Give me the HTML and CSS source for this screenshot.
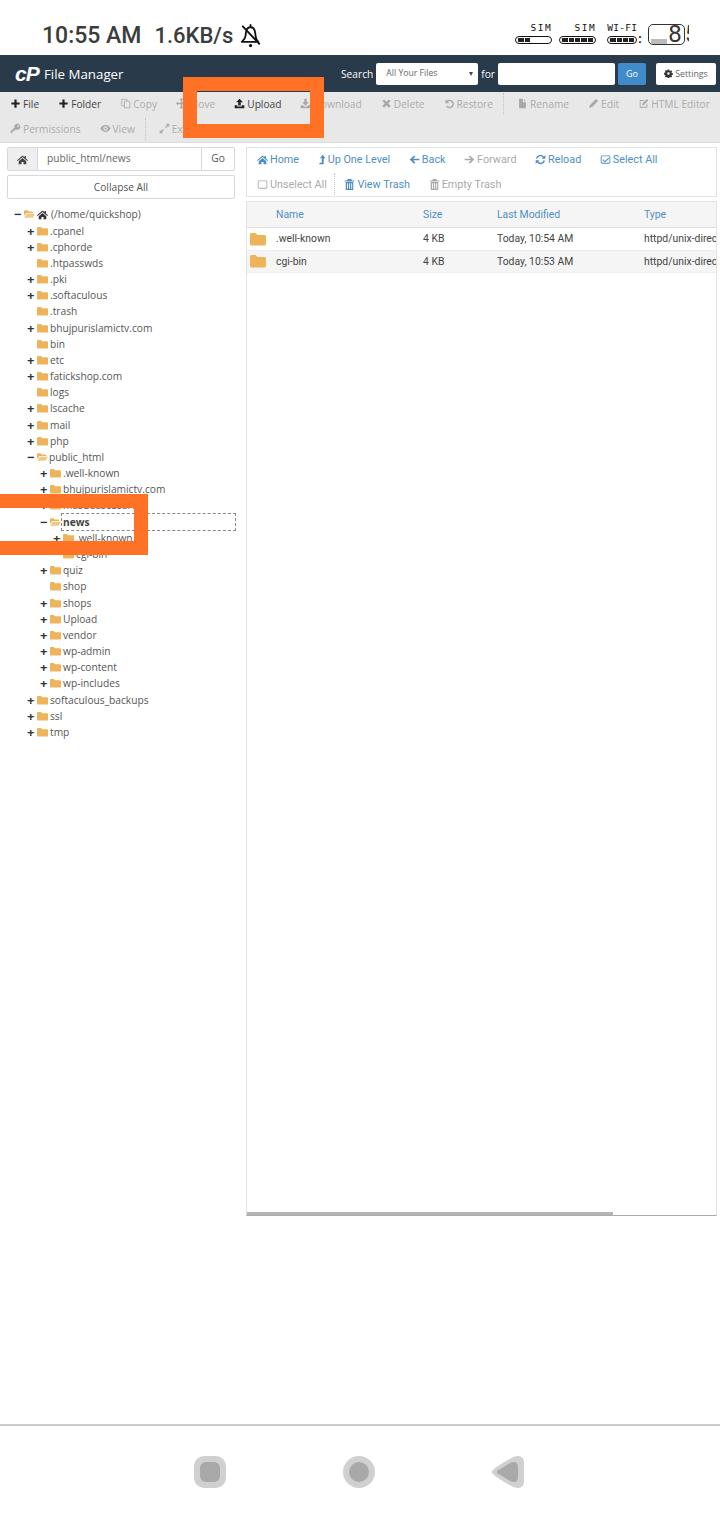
FILE: index.html
```html
<!DOCTYPE html>
<html lang="en">
<head>
    <meta charset="UTF-8">
    <title>File Manager</title>
    <link rel="stylesheet" href="styles.css">
</head>
<body>
    <!-- Icon sprite -->
    <svg class="sprite" xmlns="http://www.w3.org/2000/svg">
        <symbol id="i-plus" viewBox="0 0 16 16"><path d="M6.4 2h3.2v4.4H14v3.2H9.6V14H6.4V9.6H2V6.4h4.4z"/></symbol>
        <symbol id="i-copy" viewBox="0 0 16 16"><path d="M2 1h7l2 2v1h2l2 2v9H6v-3H2zm1.2 1.2v8.6H6V4h3.8V3.4L8.5 2.2zM7.2 5.2v8.6h6.6V6.6l-1.4-1.4z"/></symbol>
        <symbol id="i-move" viewBox="0 0 16 16"><path d="M8 0l3 3H9v4h4V5l3 3-3 3V9H9v4h2l-3 3-3-3h2V9H3v2L0 8l3-3v2h4V3H5z"/></symbol>
        <symbol id="i-upload" viewBox="0 0 16 16"><path d="M8 1l5 5.2H9.8V11H6.2V6.2H3zM1 10.5h3.8v2h6.4v-2H15V15H1z"/></symbol>
        <symbol id="i-download" viewBox="0 0 16 16"><path d="M6.2 1h3.6v5.2H13L8 11.4 3 6.2h3.2zM1 10.5h3l4 3 4-3h3V15H1z"/></symbol>
        <symbol id="i-times" viewBox="0 0 16 16"><path d="M4.5 2L8 5.5 11.5 2 14 4.500 10.500 8 14 11.500 11.500 14 8 10.500 4.500 14 2 11.500 5.500 8 2 4.500z"/></symbol>
        <symbol id="i-undo" viewBox="0 0 16 16"><path d="M2 2l2 2a6.200 6.200 0 1 1-.9 8.200l1.700-1.300A4 4 0 1 0 5.600 5.500L7.500 7.500H2z"/></symbol>
        <symbol id="i-file" viewBox="0 0 16 16"><path d="M3 1h5.500v5H13v9H3zM10 1.300L12.700 4.500H10z"/></symbol>
        <symbol id="i-pencil" viewBox="0 0 16 16"><path d="M11.500 1.500l3 3L6 13l-4.500 1.500L3 10z"/></symbol>
        <symbol id="i-edit" viewBox="0 0 16 16"><path d="M2.500 3H9L7.800 4.300H3.700v8.500h8.500V9l1.300-1.300V14H2.500zM13 1.500l2 2-6.500 6.500-2.500.5.500-2.500z"/></symbol>
        <symbol id="i-key" viewBox="0 0 16 16"><path d="M10.500 1a4.500 4.500 0 1 1-2 8.500L7 11H5v2H3v2H1v-3l5.500-5.500A4.500 4.500 0 0 1 10.500 1zm1.200 2a1.300 1.300 0 1 0 0 2.600 1.300 1.300 0 0 0 0-2.600z"/></symbol>
        <symbol id="i-eye" viewBox="0 0 16 16"><path fill-rule="evenodd" d="M8 3c3.500 0 6 2.500 7.500 5-1.500 2.500-4 5-7.500 5S2 10.500.5 8C2 5.500 4.500 3 8 3zm0 1.800a3.200 3.200 0 1 0 0 6.400 3.200 3.200 0 0 0 0-6.400zM8 6.500a1.500 1.500 0 1 1 0 3 1.500 1.500 0 0 1 0-3z"/></symbol>
        <symbol id="i-expand" viewBox="0 0 16 16"><path d="M10 1h5v5l-1.800-1.800-3 3-1.400-1.400 3-3zM6 15H1v-5l1.800 1.800 3-3 1.400 1.400-3 3z"/></symbol>
        <symbol id="i-gear" viewBox="0 0 16 16"><path fill-rule="evenodd" d="M6.700 1h2.600l.4 2 1.200.5 1.700-1.100 1.800 1.800-1.100 1.700.5 1.200 2 .4v2.600l-2 .4-.5 1.200 1.100 1.700-1.800 1.800-1.700-1.100-1.200.5-.4 2H6.700l-.4-2-1.200-.5-1.700 1.100-1.800-1.800 1.100-1.700-.5-1.200-2-.4V6.700l2-.4.5-1.200-1.100-1.700 1.800-1.800 1.700 1.100 1.200-.5zM8 5.700a2.300 2.300 0 1 0 0 4.600 2.300 2.300 0 0 0 0-4.600z"/></symbol>
        <symbol id="i-home" viewBox="0 0 16 16"><path d="M8 2l3 2.700V3h2v3.500L16 9l-1 1.200L8 4.300 1 10.200 0 9zM8 5.800l5.500 4.700V15H9.500v-3.500h-3V15H2.500v-4.500z"/></symbol>
        <symbol id="i-levelup" viewBox="3 0 11 16"><path d="M9.500 1l4 5H11v7.500c0 .8-.6 1.500-1.500 1.500H4l1.500-2.200h2.700V6H5.500z"/></symbol>
        <symbol id="i-left" viewBox="0 0 16 16"><path d="M7.500 2l1.700 1.700L6 7h9v2.200H6l3.200 3.200L7.500 14 1 8z"/></symbol>
        <symbol id="i-right" viewBox="0 0 16 16"><path d="M8.500 2L6.800 3.700 10 7H1v2.200h9l-3.200 3.200L8.500 14 15 8z"/></symbol>
        <symbol id="i-reload" viewBox="0 0 16 16"><path d="M15 1.500V7H9.500l2-2A4.600 4.600 0 0 0 3.600 6.500H1.200A6.800 6.800 0 0 1 13 3.500zM1 14.500V9h5.500l-2 2a4.600 4.600 0 0 0 7.900-1.500h2.400A6.800 6.800 0 0 1 3 12.500z"/></symbol>
        <symbol id="i-check" viewBox="0 0 16 16"><path fill-rule="evenodd" d="M3 2h10a2 2 0 0 1 2 2v8a2 2 0 0 1-2 2H3a2 2 0 0 1-2-2V4a2 2 0 0 1 2-2zm0 1.300a.8.800 0 0 0-.7.700v8c0 .4.300.7.700.7h10c.4 0 .7-.3.700-.7V4a.8.800 0 0 0-.7-.7zm9.200 2L13.300 6.400 7 12.200 3.500 8.800l1.100-1.100L7 10z"/></symbol>
        <symbol id="i-square" viewBox="0 0 16 16"><path fill-rule="evenodd" d="M3 2h10a2 2 0 0 1 2 2v8a2 2 0 0 1-2 2H3a2 2 0 0 1-2-2V4a2 2 0 0 1 2-2zm0 1.300a.8.800 0 0 0-.7.700v8c0 .4.300.7.700.7h10c.4 0 .7-.3.700-.7V4a.8.800 0 0 0-.7-.7z"/></symbol>
        <symbol id="i-trash" viewBox="0 0 16 16"><path d="M5.500 0h5l1 2H15v1.500H1V2h3.500zM2.500 4.500h11V16h-11zM4.500 6v8.200h1.300V6zm3 0v8.200h1.300V6zm3 0v8.200h1.300V6z"/></symbol>
        <symbol id="i-folder" viewBox="0 0 16 14"><path d="M1.500 1h4.300l1.500 2h7.200c.8 0 1.500.6 1.500 1.500v7.500c0 .8-.7 1.500-1.500 1.500h-13C.7 13.500 0 12.800 0 12V2.500C0 1.700.7 1 1.500 1z"/></symbol>
        <symbol id="i-folder-open" viewBox="0 0 16 14"><path d="M1.200 1.500h4l1.500 1.800h5.500c.7 0 1.200.5 1.200 1.200v1H3.500L0 9.500V2.700c0-.7.500-1.200 1.200-1.200z"/><path opacity=".75" d="M3.800 6.500H16l-3.500 6H0z"/></symbol>
        <symbol id="i-bell-off" viewBox="0 0 24 26"><path fill="none" stroke="#111" stroke-width="2" stroke-linejoin="round" stroke-linecap="round" d="M2 20h18c-2-2-2.800-3.500-3-6.500l-.5-4C16 6 14 4 11.500 4S7 6 6.500 9.500L6 13.500C5.800 16.500 4 18 2 20zM3 3l18 19M11.500 1.500V4"/><circle cx="11.500" cy="24" r="1.800" fill="#111"/></symbol>
    </svg>

    <!-- Phone status bar -->
    <div class="statusbar">
        <span class="clock">10:55 AM</span>
        <span class="speed">1.6KB/s</span>
        <svg class="bell"><use href="#i-bell-off"/></svg>
        <div class="signals">
            <div class="signal sig-sim1">
                <span class="sig-label">SIM</span>
                <div class="pill"><i></i><i></i></div>
            </div>
            <div class="signal sig-sim2">
                <span class="sig-label">SIM</span>
                <div class="pill"><i></i><i></i><i></i><i></i><i></i></div>
            </div>
            <div class="signal sig-wifi">
                <span class="sig-label">WI-FI</span>
                <div class="pill"><i></i><i></i><i></i><i></i></div>
            </div>
            <span class="wifi-dots">:</span>
            <div class="battery">
                <div class="battery-box"><div class="battery-fill"></div></div>
                <span class="battery-num">85</span>
            </div>
        </div>
    </div>

    <!-- cPanel header -->
    <div class="header">
        <span class="cp-logo">cP</span>
        <span class="cp-title">File Manager</span>
        <div class="search">
            <span>Search</span>
            <div class="search-select">All Your Files<span class="caret"></span></div>
            <span>for</span>
            <div class="search-input"></div>
            <div class="btn-go">Go</div>
            <div class="btn-settings"><svg class="ico"><use href="#i-gear"/></svg>Settings</div>
        </div>
    </div>

    <!-- File manager toolbar -->
    <div class="toolbar">
        <div class="tb-row">
            <span class="tb-item on"><svg class="ico"><use href="#i-plus"/></svg>File</span>
            <span class="tb-item on"><svg class="ico"><use href="#i-plus"/></svg>Folder</span>
            <span class="tb-item"><svg class="ico"><use href="#i-copy"/></svg>Copy</span>
            <span class="tb-item"><svg class="ico"><use href="#i-move"/></svg>Move</span>
            <span class="tb-item on"><svg class="ico"><use href="#i-upload"/></svg>Upload</span>
            <span class="tb-item"><svg class="ico"><use href="#i-download"/></svg>Download</span>
            <span class="tb-item"><svg class="ico"><use href="#i-times"/></svg>Delete</span>
            <span class="tb-item"><svg class="ico"><use href="#i-undo"/></svg>Restore</span>
            <span class="tb-sep"></span>
            <span class="tb-item"><svg class="ico"><use href="#i-file"/></svg>Rename</span>
            <span class="tb-item"><svg class="ico"><use href="#i-pencil"/></svg>Edit</span>
            <span class="tb-item"><svg class="ico"><use href="#i-edit"/></svg>HTML Editor</span>
        </div>
        <div class="tb-row">
            <span class="tb-item"><svg class="ico"><use href="#i-key"/></svg>Permissions</span>
            <span class="tb-item"><svg class="ico"><use href="#i-eye"/></svg>View</span>
            <span class="tb-sep"></span>
            <span class="tb-item"><svg class="ico"><use href="#i-expand"/></svg>Extract</span>
        </div>
    </div>

    <div class="main">
        <!-- Left column: path and tree -->
        <div class="side">
            <div class="path-row">
                <div class="path-home"><svg class="ico"><use href="#i-home"/></svg></div>
                <div class="path-input">public_html/news</div>
                <div class="path-go">Go</div>
            </div>
            <div class="collapse-btn">Collapse All</div>

            <div class="tree">
                <div class="row l0 open"><span class="tg">&#8722;</span><svg class="fo"><use href="#i-folder-open"/></svg><svg class="ico tree-home"><use href="#i-home"/></svg>(/home/quickshop)</div>
                <div class="row l1"><span class="tg">+</span><svg class="fo"><use href="#i-folder"/></svg>.cpanel</div>
                <div class="row l1"><span class="tg">+</span><svg class="fo"><use href="#i-folder"/></svg>.cphorde</div>
                <div class="row l1"><span class="tg"></span><svg class="fo"><use href="#i-folder"/></svg>.htpasswds</div>
                <div class="row l1"><span class="tg">+</span><svg class="fo"><use href="#i-folder"/></svg>.pki</div>
                <div class="row l1"><span class="tg">+</span><svg class="fo"><use href="#i-folder"/></svg>.softaculous</div>
                <div class="row l1"><span class="tg"></span><svg class="fo"><use href="#i-folder"/></svg>.trash</div>
                <div class="row l1"><span class="tg">+</span><svg class="fo"><use href="#i-folder"/></svg>bhujpurislamictv.com</div>
                <div class="row l1"><span class="tg"></span><svg class="fo"><use href="#i-folder"/></svg>bin</div>
                <div class="row l1"><span class="tg">+</span><svg class="fo"><use href="#i-folder"/></svg>etc</div>
                <div class="row l1"><span class="tg">+</span><svg class="fo"><use href="#i-folder"/></svg>fatickshop.com</div>
                <div class="row l1"><span class="tg"></span><svg class="fo"><use href="#i-folder"/></svg>logs</div>
                <div class="row l1"><span class="tg">+</span><svg class="fo"><use href="#i-folder"/></svg>lscache</div>
                <div class="row l1"><span class="tg">+</span><svg class="fo"><use href="#i-folder"/></svg>mail</div>
                <div class="row l1"><span class="tg">+</span><svg class="fo"><use href="#i-folder"/></svg>php</div>
                <div class="row l1 open"><span class="tg">&#8722;</span><svg class="fo"><use href="#i-folder-open"/></svg>public_html</div>
                <div class="row l2"><span class="tg">+</span><svg class="fo"><use href="#i-folder"/></svg>.well-known</div>
                <div class="row l2"><span class="tg">+</span><svg class="fo"><use href="#i-folder"/></svg>bhujpurislamictv.com</div>
                <div class="row l2"><span class="tg">+</span><svg class="fo"><use href="#i-folder"/></svg>masudascusare</div>
                <div class="row l2 open current"><span class="tg">&#8722;</span><svg class="fo"><use href="#i-folder-open"/></svg>news<span class="focus-box"></span></div>
                <div class="row l3"><span class="tg">+</span><svg class="fo"><use href="#i-folder"/></svg>.well-known</div>
                <div class="row l3"><span class="tg"></span><svg class="fo"><use href="#i-folder"/></svg>cgi-bin</div>
                <div class="row l2"><span class="tg">+</span><svg class="fo"><use href="#i-folder"/></svg>quiz</div>
                <div class="row l2"><span class="tg"></span><svg class="fo"><use href="#i-folder"/></svg>shop</div>
                <div class="row l2"><span class="tg">+</span><svg class="fo"><use href="#i-folder"/></svg>shops</div>
                <div class="row l2"><span class="tg">+</span><svg class="fo"><use href="#i-folder"/></svg>Upload</div>
                <div class="row l2"><span class="tg">+</span><svg class="fo"><use href="#i-folder"/></svg>vendor</div>
                <div class="row l2"><span class="tg">+</span><svg class="fo"><use href="#i-folder"/></svg>wp-admin</div>
                <div class="row l2"><span class="tg">+</span><svg class="fo"><use href="#i-folder"/></svg>wp-content</div>
                <div class="row l2"><span class="tg">+</span><svg class="fo"><use href="#i-folder"/></svg>wp-includes</div>
                <div class="row l1"><span class="tg">+</span><svg class="fo"><use href="#i-folder"/></svg>softaculous_backups</div>
                <div class="row l1"><span class="tg">+</span><svg class="fo"><use href="#i-folder"/></svg>ssl</div>
                <div class="row l1"><span class="tg">+</span><svg class="fo"><use href="#i-folder"/></svg>tmp</div>
            </div>
        </div>

        <!-- Right column: navigation and file list -->
        <div class="content">
            <div class="nav-box">
                <div class="nav-row">
                    <span class="nav-item"><svg class="ico"><use href="#i-home"/></svg>Home</span>
                    <span class="nav-item"><svg class="ico ico-narrow"><use href="#i-levelup"/></svg>Up One Level</span>
                    <span class="nav-item"><svg class="ico"><use href="#i-left"/></svg>Back</span>
                    <span class="nav-item off"><svg class="ico"><use href="#i-right"/></svg>Forward</span>
                    <span class="nav-item"><svg class="ico"><use href="#i-reload"/></svg>Reload</span>
                    <span class="nav-item"><svg class="ico"><use href="#i-check"/></svg>Select All</span>
                </div>
                <div class="nav-row">
                    <span class="nav-item off"><svg class="ico"><use href="#i-square"/></svg>Unselect All</span>
                    <span class="tb-sep nav-sep"></span>
                    <span class="nav-item"><svg class="ico"><use href="#i-trash"/></svg>View Trash</span>
                    <span class="nav-item off"><svg class="ico"><use href="#i-trash"/></svg>Empty Trash</span>
                </div>
            </div>

            <div class="files">
                <table class="file-table">
                    <thead>
                        <tr><th class="c-icon"></th><th class="c-name">Name</th><th class="c-size">Size</th><th class="c-date">Last Modified</th><th class="c-type">Type</th></tr>
                    </thead>
                    <tbody>
                        <tr>
                            <td><svg class="fo-big"><use href="#i-folder"/></svg></td>
                            <td>.well-known</td><td>4 KB</td><td>Today, 10:54 AM</td><td>httpd/unix-directory</td>
                        </tr>
                        <tr class="alt">
                            <td><svg class="fo-big"><use href="#i-folder"/></svg></td>
                            <td>cgi-bin</td><td>4 KB</td><td>Today, 10:53 AM</td><td>httpd/unix-directory</td>
                        </tr>
                    </tbody>
                </table>
                <div class="hscroll"><div class="hscroll-thumb"></div></div>
            </div>
        </div>
    </div>

    <!-- Phone navigation bar -->
    <div class="softkeys">
        <div class="key key-square"><i></i></div>
        <div class="key key-circle"><i></i></div>
        <svg class="key-back" viewBox="0 0 32 32">
            <path fill="#d0d0d0" d="M26 0c4 0 6 3 6 7v18c0 4-2 7-6 7-3 0-7-2-12-5-5-3-10-6-13-9-1.500-1.500-1.500-2.500 0-4 3-3 8-6 13-9 5-3 9-5 12-5z"/>
            <path fill="#a9a9a9" d="M22 6c2.500 0 4 2 4 5v10c0 3-1.500 5-4 5-2 0-5-1.500-8-3.500-3-2-6-3.800-8.500-5-.7-.8-.7-2.200 0-3 2.500-1.200 5.500-3 8.500-5 3-2 6-3.500 8-3.500z"/>
        </svg>
    </div>

    <!-- Orange annotation boxes drawn on the screenshot -->
    <div class="mark mark-upload"></div>
    <div class="mark mark-news"></div>
</body>
</html>
```

FILE: styles.css
```css
* {
    box-sizing: border-box;
    margin: 0;
    padding: 0;
}

html, body {
    width: 720px;
    height: 1520px;
    overflow: hidden;
}

body {
    position: relative;
    display: flex;
    flex-direction: column;
    background: #fff;
    font-family: "Open Sans", sans-serif;
    font-size: 10.2px;
    color: #555;
}

.sprite {
    display: none;
}

.ico {
    width: 11px;
    height: 11px;
    fill: currentColor;
    flex: none;
}

.ico-narrow {
    width: 8px;
}

/* Status bar */
.statusbar {
    height: 55px;
    flex: none;
    display: flex;
    align-items: flex-start;
    padding: 22px 0 0 42px;
    font-family: Roboto, sans-serif;
    font-size: 23px;
    font-weight: 500;
    line-height: 28px;
    color: #3c3c3c;
}

.speed {
    margin-left: 13px;
    font-size: 22px;
}

.bell {
    width: 22px;
    height: 25px;
    margin: 1px 0 0 7px;
}

.signals {
    display: flex;
    align-items: flex-start;
    margin-left: 253px;
}

.signal {
    display: flex;
    flex-direction: column;
    align-items: flex-end;
}

.sig-label {
    font-family: "DejaVu Sans Mono", monospace;
    font-size: 9.5px;
    font-weight: 400;
    line-height: 12px;
    height: 14px;
    letter-spacing: 1.5px;
    white-space: nowrap;
    color: #111;
}

.sig-sim1 {
    width: 37px;
}

.sig-sim2 {
    width: 37px;
    margin-left: 7px;
}

.sig-wifi {
    width: 30px;
    margin-left: 11px;
}

.sig-wifi .sig-label {
    letter-spacing: .3px;
}

.pill {
    width: 100%;
    height: 8px;
    display: flex;
    gap: 1px;
    padding: 1px 2px;
    border: 1.5px solid #111;
    border-radius: 4px;
}

.pill i {
    width: 5.5px;
    background: #222;
}

.wifi-dots {
    margin: 10px 0 0 1px;
    width: 10px;
    font-size: 12px;
    font-weight: 700;
    line-height: 14px;
    color: #111;
}

.battery {
    position: relative;
    width: 41px;
    height: 22px;
    margin-top: 2px;
    overflow: hidden;
}

.battery-box {
    width: 37px;
    height: 21px;
    padding: 14px 17px 1px 2px;
    border: 1.5px solid #333;
    border-radius: 5px;
}

.battery-fill {
    height: 5px;
    background: #bcbcbc;
}

.battery-num {
    position: absolute;
    left: 20px;
    top: -4px;
    font-size: 24px;
    font-weight: 400;
    letter-spacing: 3px;
    color: #333;
}

/* Header */
.header {
    height: 37px;
    flex: none;
    display: flex;
    align-items: center;
    padding: 0 4px 0 15px;
    background: #293a4a;
    color: #fff;
}

.cp-logo {
    width: 24px;
    font-family: "Liberation Sans", sans-serif;
    font-size: 21px;
    font-weight: 700;
    font-style: italic;
    letter-spacing: -1px;
}

.cp-title {
    margin-left: 5px;
    font-size: 13.3px;
}

.search {
    display: flex;
    align-items: center;
    margin-left: auto;
}

.search-select {
    position: relative;
    width: 102px;
    height: 22px;
    margin: 0 3px;
    padding-left: 10px;
    line-height: 21px;
    font-size: 8.7px;
    color: #666;
    background: #fff;
    border-radius: 2px;
}

.caret {
    position: absolute;
    right: 5px;
    top: 9px;
    border-top: 4px solid #444;
    border-left: 2px solid transparent;
    border-right: 2px solid transparent;
}

.search-input {
    width: 117px;
    height: 22px;
    margin-left: 3px;
    background: #fff;
    border-radius: 2px;
}

.btn-go {
    width: 28px;
    height: 22px;
    margin-left: 3px;
    text-align: center;
    line-height: 21px;
    font-size: 9px;
    background: #428bca;
    border-radius: 2px;
}

.btn-settings {
    display: flex;
    align-items: center;
    justify-content: center;
    gap: 2px;
    width: 60px;
    height: 22px;
    margin-left: 10px;
    font-size: 8.8px;
    color: #666;
    background: #fff;
    border-radius: 2px;
}

.btn-settings .ico {
    width: 9px;
    height: 9px;
    color: #333;
}

/* Toolbar */
.toolbar {
    height: 51px;
    flex: none;
    padding-left: 10px;
    background: #e8e8e8;
    border-bottom: 1px solid #ddd;
}

.tb-row {
    height: 25px;
    padding-bottom: 2px;
    display: flex;
    align-items: center;
    white-space: nowrap;
}

.tb-item {
    display: flex;
    align-items: center;
    gap: 2px;
    margin-right: 19px;
    color: #acacac;
}

.tb-item.on {
    color: #444;
}

.tb-item .ico {
    color: #a8a8a8;
}

.tb-item.on .ico {
    color: #222;
}

.tb-sep {
    width: 0;
    height: 22px;
    margin: 0 13px 0 -9px;
    border-left: 1px dotted #c4c4c4;
}

/* Main area */
.main {
    flex: 1;
    min-height: 0;
    display: flex;
    gap: 11px;
    padding: 4px 3px 208px 7px;
}

.side {
    width: 228px;
    flex: none;
}

.path-row {
    display: flex;
    height: 24px;
    border: 1px solid #d8d8d8;
    border-radius: 2px;
}

.path-home {
    width: 30px;
    display: flex;
    align-items: center;
    justify-content: center;
    color: #444;
    background: #eee;
    border-right: 1px solid #d8d8d8;
}

.path-input {
    flex: 1;
    padding-left: 9px;
    line-height: 21px;
    color: #666;
}

.path-go {
    width: 33px;
    text-align: center;
    line-height: 21px;
    border-left: 1px solid #d8d8d8;
}

.collapse-btn {
    height: 24px;
    margin-top: 4px;
    text-align: center;
    line-height: 22px;
    border: 1px solid #d8d8d8;
    border-radius: 2px;
}

/* Tree */
.tree {
    margin-top: 7.3px;
}

.row {
    position: relative;
    display: flex;
    align-items: center;
    height: 16.172px;
    white-space: nowrap;
}

.l0 { padding-left: 7px; }
.l1 { padding-left: 20px; }
.l2 { padding-left: 33px; }
.l3 { padding-left: 46px; }

.tg {
    width: 10px;
    flex: none;
    font-size: 13px;
    font-weight: 700;
    line-height: 14px;
    color: #333;
}

.fo {
    width: 11px;
    height: 10px;
    margin-right: 2px;
    flex: none;
    fill: #eeb45c;
}

.l1.open .fo,
.l0.open .fo {
    margin-right: 1px;
}

.tree-home {
    margin: 0 3px 0 1px;
    color: #333;
}

.current {
    font-weight: 700;
    color: #444;
}

.focus-box {
    position: absolute;
    left: 54px;
    right: -1px;
    top: -1px;
    height: 18px;
    border: 1px dashed #888;
}

/* Right column */
.content {
    width: 471px;
    display: flex;
    flex-direction: column;
}

.nav-box {
    height: 50px;
    padding-left: 10px;
    font-family: Roboto, sans-serif;
    font-size: 10.8px;
    border: 1px solid #e3e3e3;
}

.nav-row {
    height: 25px;
    padding-bottom: 3px;
    display: flex;
    align-items: center;
    white-space: nowrap;
}

.nav-item {
    display: flex;
    align-items: center;
    gap: 2px;
    margin-right: 18.6px;
    color: #4d8fc4;
}

.nav-item.off {
    color: #aaa;
}

.nav-sep {
    margin: 0 9px 0 -11px;
}

.files {
    flex: 1;
    margin-top: 4px;
    display: flex;
    flex-direction: column;
    justify-content: space-between;
    overflow: hidden;
    border-left: 1px solid #e3e3e3;
    border-right: 1px solid #e3e3e3;
    border-bottom: 1px solid #aaa;
}

.file-table {
    width: 498px;
    table-layout: fixed;
    border-collapse: collapse;
    font-family: Roboto, sans-serif;
    font-size: 10.4px;
}

.file-table th {
    height: 26px;
    text-align: left;
    font-weight: 400;
    color: #4d8fc4;
    background: #f5f5f5;
    border-top: 1px solid #e3e3e3;
    border-bottom: 1px solid #ddd;
}

.file-table td {
    height: 22.5px;
    white-space: nowrap;
    overflow: hidden;
    color: #444;
    border-bottom: 1px solid #eee;
}

.alt td {
    background: #f5f5f5;
}

.c-icon { width: 29px; }
.c-name { width: 147px; }
.c-size { width: 74px; }
.c-date { width: 147px; }
.c-type { width: 101px; }

.fo-big {
    display: block;
    width: 16px;
    height: 14px;
    margin-left: 3px;
    fill: #eeb45c;
}

.hscroll {
    height: 3px;
}

.hscroll-thumb {
    width: 366px;
    height: 3px;
    background: #b5b5b5;
}

/* Soft keys */
.softkeys {
    height: 96px;
    flex: none;
    display: flex;
    align-items: flex-start;
    justify-content: space-between;
    padding: 30px 196px 0 194px;
    border-top: 2px solid #ccc;
}

.key {
    width: 32px;
    height: 32px;
    display: flex;
    align-items: center;
    justify-content: center;
    background: #d0d0d0;
}

.key i {
    width: 20px;
    height: 20px;
    background: #a9a9a9;
}

.key-square {
    border-radius: 10px;
}

.key-square i {
    border-radius: 6px;
}

.key-circle,
.key-circle i {
    border-radius: 50%;
}

.key-back {
    width: 32px;
    height: 32px;
}

/* Annotations */
.mark {
    position: absolute;
    border: 14px solid #ff7226;
}

.mark-upload {
    left: 183px;
    top: 77px;
    width: 141px;
    height: 61px;
}

.mark-news {
    left: -20px;
    top: 494px;
    width: 168px;
    height: 61px;
}
```
